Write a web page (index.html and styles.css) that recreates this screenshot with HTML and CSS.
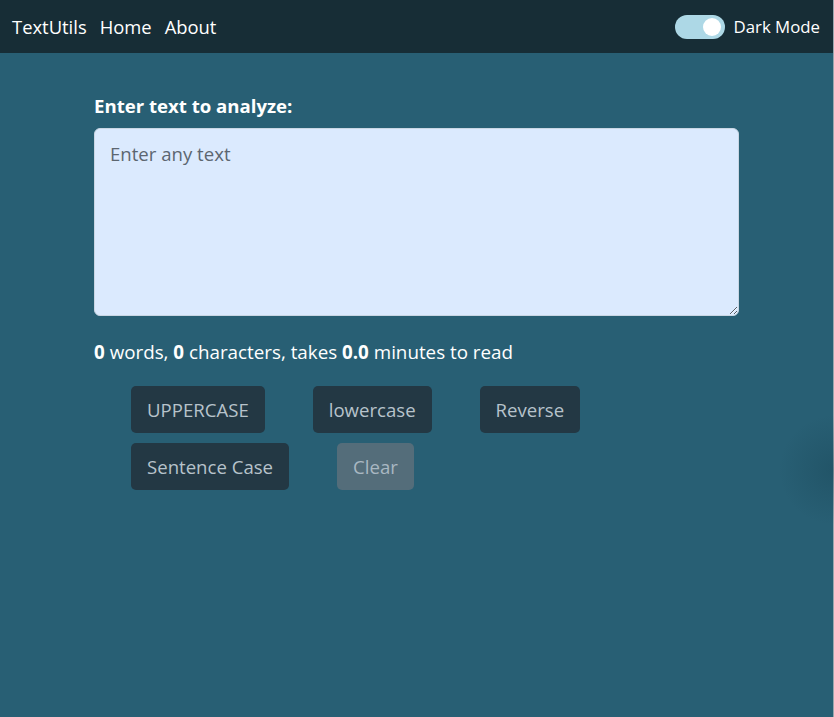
FILE: index.html
```html
<!DOCTYPE html>
<html>
<head>
  <meta charset="UTF-8">
  <title>TextUtils</title>
  <link rel="stylesheet" href="styles.css">
</head>
<body>
  <nav class="navbar">
    <div class="nav-left">
      <a class="brand" href="#">TextUtils</a>
      <a class="nav-link" href="#">Home</a>
      <a class="nav-link" href="#">About</a>
    </div>
    <div class="mode-toggle">
      <span class="switch"><span class="knob"></span></span>
      <span class="toggle-label">Dark Mode</span>
    </div>
  </nav>

  <div class="container">
    <h3>Enter text to analyze:</h3>
    <textarea class="text-box" placeholder="Enter any text"></textarea>
    <p class="summary"><b>0</b> words, <b>0</b> characters, takes <b>0.0</b> minutes to read</p>
    <div class="buttons">
      <button class="btn">UPPERCASE</button>
      <button class="btn">lowercase</button>
      <button class="btn">Reverse</button>
      <button class="btn">Sentence Case</button>
      <button class="btn btn-disabled" disabled>Clear</button>
    </div>
  </div>
  <div class="blob"></div>
</body>
</html>
```

FILE: styles.css
```css
html, body {
  height: 100%;
}
body {
  margin: 0;
  font-family: 'Segoe UI', 'Open Sans', sans-serif;
  background-color: #285f74;
  color: white;
  overflow: hidden;
  border-right: 1px solid #9aa6ad;
  box-sizing: border-box;
}
.navbar {
  height: 53px;
  background-color: #172d36;
  display: flex;
  align-items: center;
  justify-content: space-between;
  padding: 0 13px 0 12px;
}
.nav-left {
  display: flex;
  align-items: center;
  gap: 13px;
}
.nav-left a {
  color: white;
  text-decoration: none;
  font-size: 18.4px;
}
.mode-toggle {
  display: flex;
  align-items: center;
  gap: 9px;
}
.switch {
  width: 50px;
  height: 24px;
  border-radius: 12px;
  background-color: #add8e6;
  display: flex;
  align-items: center;
  justify-content: flex-end;
  padding: 0 4px;
  box-sizing: border-box;
}
.knob {
  width: 18px;
  height: 18px;
  border-radius: 50%;
  background-color: white;
}
.toggle-label {
  font-size: 16.8px;
}
.container {
  width: 645px;
  margin-left: 94px;
  padding-top: 40px;
}
h3 {
  margin: 0 0 10px 0;
  font-size: 18.6px;
  font-weight: 700;
}
.text-box {
  display: block;
  width: 100%;
  height: 188px;
  box-sizing: border-box;
  background-color: #dbeafe;
  border: 1px solid #c9d6e3;
  border-radius: 6px;
  padding: 12px 15px;
  font-family: inherit;
  font-size: 18.6px;
  color: #212529;
}
.text-box::placeholder {
  color: #5c6670;
}
.summary {
  margin: 23px 0 21px 0;
  font-size: 18.8px;
}
.buttons {
  display: flex;
  flex-wrap: wrap;
  width: 470px;
  padding-left: 37px;
  column-gap: 48px;
  row-gap: 10px;
}
.btn {
  height: 47px;
  padding: 0 16px;
  border: none;
  border-radius: 5px;
  background-color: #233844;
  color: #b7c3cb;
  font-family: inherit;
  font-size: 18.6px;
}
.btn-disabled {
  background-color: #546d7a;
  color: #a9b8c2;
}
.blob {
  position: absolute;
  left: 764px;
  top: 410px;
  width: 70px;
  height: 120px;
  background: radial-gradient(circle at 100% 50%, rgba(20, 60, 75, 0.3), rgba(20, 60, 75, 0) 55px);
}
```
